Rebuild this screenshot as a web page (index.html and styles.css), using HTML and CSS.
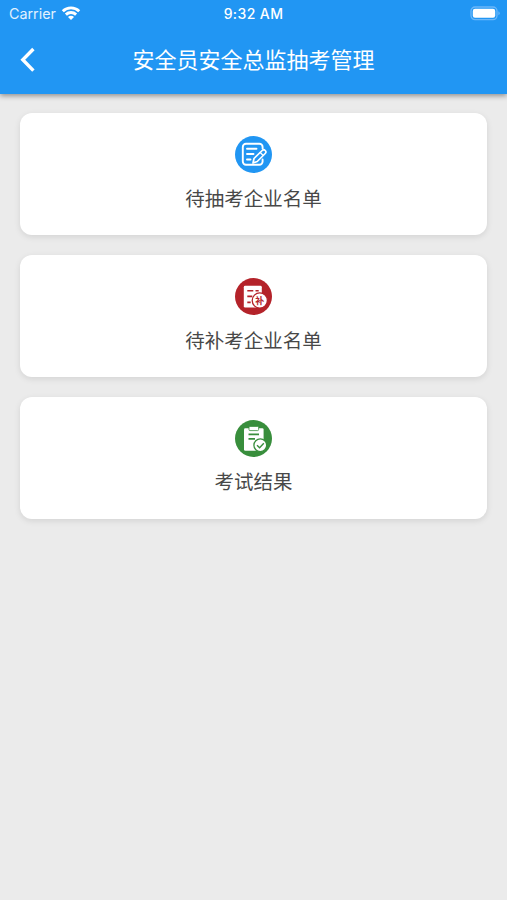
FILE: index.html
```
<!DOCTYPE html>
<html lang="zh">

<head>
  <meta charset="utf-8">
  <meta name="viewport" content="width=device-width, initial-scale=1.0" />
  <title>安全员安全总监抽考管理</title>
  <link rel="stylesheet" href="styles.css">
</head>

<body>
  <header class="header">
    <div class="status-bar">
      <div class="carrier">
        <span>Carrier</span>
        <svg class="wifi" width="20" height="14" viewBox="0 0 20 14" fill="none" stroke="#fff" stroke-width="2.9">
          <path d="M1.8 5.2a11.8 11.8 0 0 1 16.4 0" />
          <path d="M4.9 8.6a7.3 7.3 0 0 1 10.2 0" />
          <path d="M10 14 7 11a4.2 4.2 0 0 1 6 0z" fill="#fff" stroke="none" />
        </svg>
      </div>
      <div class="time">9:32 AM</div>
      <div class="battery">
        <svg width="31" height="15" viewBox="0 0 31 15">
          <rect x="1" y="1" width="26" height="12.6" rx="4" fill="none" stroke="#6bb7f9" stroke-width="1.3" />
          <rect x="2.8" y="2.8" width="22.4" height="9" rx="2.2" fill="#fff" />
          <path d="M28.4 5.3v4a2.2 2.2 0 0 0 0-4z" fill="#6bb7f9" />
        </svg>
      </div>
    </div>
    <div class="nav-bar">
      <div class="back">
        <svg width="16" height="26" viewBox="0 0 16 26" fill="none" stroke="#fff" stroke-width="3.4">
          <path d="M13.4 2 2.8 12.8 13.4 23.6" />
        </svg>
      </div>
      <h1 class="title">安全员安全总监抽考管理</h1>
    </div>
  </header>

  <main class="menu">
    <div class="card">
      <svg class="icon" viewBox="0 0 37 37">
        <circle cx="18.5" cy="18.5" r="18.5" fill="#2196f3" />
        <g fill="none" stroke="#fff" stroke-width="1.9" stroke-linecap="round" stroke-linejoin="round">
          <path d="M27.6 12.4V11a3.2 3.2 0 0 0-3.2-3.2H11A3.2 3.2 0 0 0 7.8 11v14.6a3.2 3.2 0 0 0 3.2 3.2h13.4a3.2 3.2 0 0 0 3.2-3.2v-2.2" />
          <path d="M12 12.8h9.5M12 18h6.5M12 23.5h3.5" />
          <path d="M18 27l1-4.5 8.2-8a2 2 0 0 1 3 3l-8 8z" fill="#2196f3" stroke-width="1.7" />
          <path d="M25.2 16.5l2.8 2.8" stroke-width="1.3" />
        </g>
      </svg>
      <div class="label">待抽考企业名单</div>
    </div>
    <div class="card">
      <svg class="icon" viewBox="0 0 37 37">
        <circle cx="18.5" cy="18.5" r="18.5" fill="#b4232a" />
        <rect x="8.8" y="7.8" width="18" height="21.8" rx="1.4" fill="#fff" />
        <path d="M12.3 12.8h6M20.5 12.8h3.2M12.3 18.4h5M12.3 24.4h3.4" stroke="#b4232a" stroke-width="1.6" />
        <circle cx="24.8" cy="22.5" r="7.6" fill="#fff" stroke="#b4232a" stroke-width="1.3" />
        <text class="badge-text" x="24.8" y="25.8" text-anchor="middle">补</text>
      </svg>
      <div class="label">待补考企业名单</div>
    </div>
    <div class="card">
      <svg class="icon" viewBox="0 0 37 37">
        <circle cx="18.5" cy="18.5" r="18.5" fill="#388e3c" />
        <rect x="9" y="8.3" width="19.6" height="22.4" rx="1.3" fill="#fff" />
        <rect x="14" y="6.4" width="9.6" height="4.2" rx="1" fill="#fff" stroke="#388e3c" stroke-width="0.8" />
        <path d="M13.5 14.4h10.5M13.5 18.8h6.5" stroke="#388e3c" stroke-width="1.7" />
        <circle cx="25.3" cy="25.3" r="6.4" fill="#fff" stroke="#388e3c" stroke-width="1.3" />
        <path d="M22 25.2l2.6 2.5 4.2-4.4" fill="none" stroke="#388e3c" stroke-width="1.4" />
      </svg>
      <div class="label">考试结果</div>
    </div>
  </main>
</body>

</html>
```
FILE: styles.css
```
* {
  box-sizing: border-box;
}

body {
  margin: 0;
  min-height: 100vh;
  background: #ebebeb;
  font-family: "Inter", "Noto Sans CJK SC", sans-serif;
}

.header {
  height: 93.5px;
  background: #2196f3;
  color: #fff;
  box-shadow: 0 2px 5px rgba(0, 0, 0, 0.38);
}

.status-bar {
  display: grid;
  grid-template-columns: 1fr auto 1fr;
  align-items: center;
  height: 27px;
  padding: 0 6px;
}

.carrier {
  display: flex;
  align-items: center;
  gap: 5px;
  padding-left: 3px;
  font-size: 14.3px;
  color: #e2f1fe;
}

.wifi {
  margin-top: -2px;
}

.time {
  font-size: 14px;
  font-weight: 500;
  letter-spacing: 0.4px;
}

.battery {
  display: flex;
  justify-content: flex-end;
}

.nav-bar {
  display: grid;
  grid-template-columns: 40px 1fr 40px;
  align-items: center;
  height: 66px;
}

.back {
  display: flex;
  padding-left: 20px;
}

.title {
  margin: 0;
  text-align: center;
  font-size: 22px;
  font-weight: 400;
  line-height: 32px;
}

.menu {
  display: flex;
  flex-direction: column;
  gap: 19.5px;
  padding: 19.5px 20px 0;
}

.card {
  display: flex;
  flex-direction: column;
  align-items: center;
  height: 122.3px;
  padding-top: 23.3px;
  border-radius: 12px;
  background: #fff;
  box-shadow: 0 2px 6px rgba(0, 0, 0, 0.1);
}

.icon {
  width: 37px;
  height: 37px;
}

.label {
  margin-top: 10.6px;
  font-size: 19.5px;
  line-height: 30px;
  color: #484848;
}

.badge-text {
  font-size: 9px;
  font-weight: 700;
  fill: #b4232a;
}
```
